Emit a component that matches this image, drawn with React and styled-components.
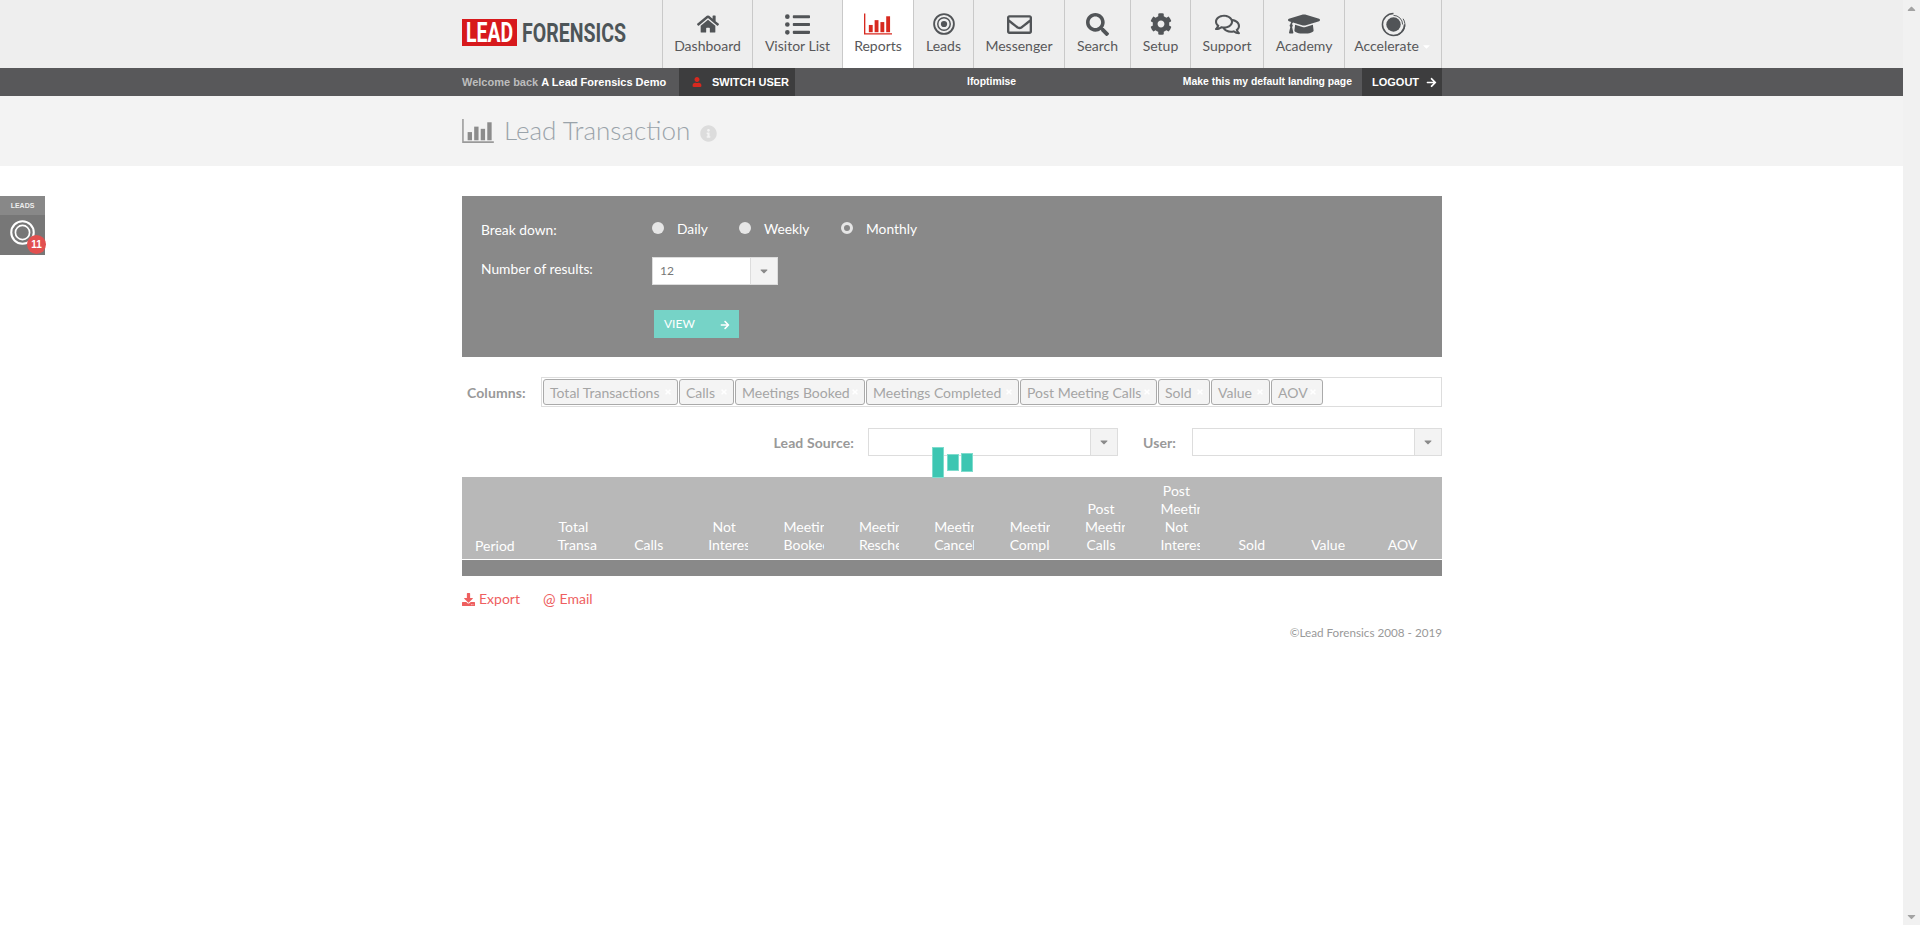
import React from 'react';
import styled, { createGlobalStyle } from 'styled-components';
import { FaHome, FaListUl, FaRegEnvelope, FaSearch, FaCog, FaRegComments, FaGraduationCap, FaUser, FaArrowRight, FaDownload, FaInfoCircle, FaCaretDown, FaCaretUp, FaTimes } from 'react-icons/fa';

const GlobalStyle = createGlobalStyle`
    html, body {
        margin: 0;
        padding: 0;
        background: #fff;
        font-family: Lato, "Open Sans", sans-serif;
    }
`;

const Page = styled.div`
    display: flex;
    min-height: 925px;
`;

const Content = styled.div`
    flex: 1;
    min-width: 0;
    position: relative;
`;

const ScrollTrack = styled.div`
    width: 17px;
    flex: none;
    background: #f1f1f1;
    color: #a3a3a3;
    display: flex;
    flex-direction: column;
    justify-content: space-between;
    align-items: center;
    height: 925px;
    font-size: 13px;
    svg { display: block; margin: 2px 0; }
`;

const Wrap = styled.div`
    width: 980px;
    margin-left: 462px;
`;

const Header = styled.header`
    height: 68px;
    background: #eeeeee;
`;

const HeaderInner = styled(Wrap)`
    display: flex;
    height: 68px;
    justify-content: space-between;
`;

const LogoBox = styled.div`
    padding-top: 19px;
`;

const Nav = styled.nav`
    display: flex;
    border-right: 1px solid #c9c9c9;
`;

const NavItem = styled.a`
    width: ${p => p.$w}px;
    box-sizing: border-box;
    border-left: 1px solid #c9c9c9;
    background: ${p => p.$active ? '#fff' : 'transparent'};
    display: flex;
    flex-direction: column;
    align-items: center;
    color: #58585a;
    font-size: 14px;
    line-height: 18px;
    white-space: nowrap;
`;

const NavIcon = styled.div`
    height: 37px;
    box-sizing: border-box;
    padding-top: 11px;
    display: flex;
    align-items: center;
    justify-content: center;
    color: #515457;
`;

const NavLabel = styled.span`
    display: flex;
    align-items: center;
`;

const NavCaret = styled(FaCaretDown)`
    color: #fff;
    font-size: 11px;
    margin-left: 2px;
`;

const InfoBar = styled.div`
    height: 28px;
    background: #58585a;
    font-family: "Liberation Sans", Arial, sans-serif;
    font-size: 11px;
    font-weight: 700;
    color: #fff;
`;

const InfoInner = styled(Wrap)`
    display: flex;
    align-items: stretch;
    height: 28px;
    line-height: 28px;
    white-space: nowrap;
`;

const Welcome = styled.span`
    width: 217px;
    color: #bdbdbd;
    b { color: #fff; }
`;

const DarkBlock = styled.a`
    display: flex;
    align-items: center;
    background: #3d3d3e;
    box-sizing: border-box;
    width: ${p => p.$w}px;
    padding-left: ${p => p.$pad}px;
    gap: ${p => p.$gap}px;
    svg { flex: none; }
`;

const Domain = styled.span`
    margin-left: 172px;
    font-size: 10.4px;
`;

const DefaultLink = styled.a`
    margin-left: auto;
    margin-right: 10px;
    font-size: 10.4px;
`;

const TitleBand = styled.div`
    height: 70px;
    background: #f3f3f3;
`;

const TitleInner = styled(Wrap)`
    display: flex;
    align-items: center;
    height: 70px;
`;

const Title = styled.h1`
    margin: 0 0 0 10px;
    font-size: 26px;
    font-weight: 300;
    color: #9aa3aa;
    line-height: 30px;
    padding-bottom: 3px;
`;

const InfoIcon = styled(FaInfoCircle)`
    color: #dcdcdc;
    font-size: 17px;
    margin-left: 10px;
    margin-top: 5px;
`;

const SideTab = styled.div`
    position: absolute;
    left: 0;
    top: 196px;
    width: 45px;
    height: 59px;
    background: #777;
`;

const SideTabHead = styled.div`
    height: 19px;
    line-height: 19px;
    background: #888;
    color: #eee;
    font-family: "Liberation Sans", Arial, sans-serif;
    font-size: 7px;
    font-weight: 700;
    text-align: center;
`;

const SideIcon = styled.div`
    padding: 5px 0 0 10px;
`;

const SideBadge = styled.span`
    position: absolute;
    left: 27px;
    top: 39px;
    width: 19px;
    height: 19px;
    border-radius: 50%;
    background: #e2504f;
    color: #fff;
    font-family: "Liberation Sans", Arial, sans-serif;
    font-size: 10px;
    font-weight: 700;
    line-height: 19px;
    text-align: center;
`;

const Main = styled(Wrap)`
    position: relative;
    padding-top: 30px;
`;

const FilterPanel = styled.section`
    background: #898989;
    padding: 22px 0 20px 19px;
    height: 161px;
    box-sizing: border-box;
    color: #fff;
    font-size: 13.8px;
`;

const FilterRow = styled.div`
    display: grid;
    grid-template-columns: 171px 1fr;
    align-items: start;
    margin-bottom: ${p => p.$mb}px;
`;

const FilterLabel = styled.label`
    line-height: 18px;
    padding-top: 3px;
`;

const Radios = styled.div`
    display: flex;
    height: 20px;
    align-items: center;
`;

const Radio = styled.span`
    display: flex;
    align-items: center;
    width: ${p => p.$w}px;
    &::before {
        content: '';
        width: 12px;
        height: 12px;
        box-sizing: border-box;
        border-radius: 50%;
        background: ${p => p.$on ? '#888' : '#e6e6e6'};
        border: ${p => p.$on ? '3px solid #e6e6e6' : 'none'};
        margin-right: 13px;
    }
`;

const SelectBox = styled.div`
    display: flex;
    width: ${p => p.$w}px;
    height: 28px;
    box-sizing: border-box;
    border: 1px solid #dddddd;
    background: #fff;
    color: #777;
    font-size: 12px;
    line-height: 26px;
`;

const SelectValue = styled.div`
    flex: 1;
    padding-left: 7px;
`;

const SelectArrow = styled.div`
    width: 26px;
    border-left: 1px solid #dddddd;
    background: #f3f3f3;
    display: flex;
    align-items: center;
    justify-content: center;
    color: #8a8a8a;
    font-size: 12px;
`;

const ViewButton = styled.a`
    display: flex;
    align-items: center;
    justify-content: space-between;
    width: 85px;
    height: 28px;
    margin-left: 173px;
    padding: 0 9px 2px 10px;
    box-sizing: border-box;
    background: #76d3c7;
    color: #fff;
    font-size: 12px;
    svg { margin-top: 3px; }
`;

const ColumnsRow = styled.div`
    display: flex;
    align-items: center;
    margin-top: 20px;
`;

const ColumnsLabel = styled.span`
    width: 79px;
    padding-left: 5px;
    box-sizing: border-box;
    color: #999;
    font-weight: 700;
    font-size: 14px;
    letter-spacing: 0.1px;
`;

const TagBox = styled.div`
    flex: 1;
    height: 30px;
    box-sizing: border-box;
    border: 1px solid #dddddd;
    padding: 1px;
    display: flex;
    gap: 1px;
`;

const Tag = styled.span`
    display: flex;
    justify-content: space-between;
    align-items: center;
    width: ${p => p.$w}px;
    height: 26px;
    box-sizing: border-box;
    border: 1px solid #aaa;
    border-radius: 3px;
    background: #f4f4f4;
    padding: 0 5px 0 6px;
    color: #a5a5a5;
    font-size: 14px;
    white-space: nowrap;
    svg { color: #fff; font-size: 8px; flex: none; }
`;

const SelectRow = styled.div`
    display: flex;
    justify-content: flex-end;
    align-items: center;
    margin-top: 21px;
`;

const SelectLabel = styled.span`
    color: #999;
    font-weight: 700;
    font-size: 14px;
    letter-spacing: 0.1px;
    margin-right: ${p => p.$mr}px;
`;

const SelectGap = styled.div`
    width: 25px;
`;

const Loader = styled.div`
    position: absolute;
    left: 470px;
    top: 281px;
    display: flex;
    align-items: center;
    gap: 2.5px;
`;

const LoaderBar = styled.span`
    width: 12px;
    height: ${p => p.$h}px;
    box-sizing: border-box;
    background: #3cc6b2;
    border: 1px solid #7fdccd;
`;

const Table = styled.table`
    width: 980px;
    margin-top: 21px;
    table-layout: fixed;
    border-collapse: collapse;
    font-size: 14px;
    line-height: 18px;
    color: #fff;
`;

const HeadRow = styled.tr`
    background: #b8b8b8;
    border-bottom: 1px solid #fff;
`;

const Th = styled.th`
    padding: 5px 0;
    font-weight: 400;
    vertical-align: bottom;
`;

const ThClip = styled.div`
    width: 40px;
    box-sizing: border-box;
    margin-left: 20px;
    padding-right: 8px;
    overflow: hidden;
    text-align: center;
`;

const ThPeriod = styled.div`
    margin-left: 13px;
    text-align: left;
    position: relative;
    top: 1px;
`;

const EmptyRow = styled.td`
    height: 16px;
    padding: 0;
    background: #898989;
`;

const Links = styled.div`
    display: flex;
    gap: 23px;
    margin-top: 14px;
`;

const ExportLink = styled.a`
    display: flex;
    align-items: center;
    gap: 4px;
    color: #ee5f5f;
    font-size: 14px;
    line-height: 18px;
`;

const AtSign = styled.span`
    font-size: 15px;
`;

const Footer = styled.div`
    margin-top: 16px;
    text-align: right;
    color: #999;
    font-size: 11.7px;
    line-height: 16px;
`;

const LogoMark = () => (
    <svg width="165" height="27" viewBox="0 0 165 27">
        <rect width="55" height="27" fill="#d7191c" />
        <text x="4" y="23" fontFamily="Roboto, sans-serif" fontWeight="700" fontSize="28" fill="#fff" textLength="47" lengthAdjust="spacingAndGlyphs">LEAD</text>
        <text x="60" y="22.7" fontFamily="Roboto, sans-serif" fontWeight="700" fontSize="25" fill="#4d5558" textLength="104" lengthAdjust="spacingAndGlyphs">FORENSICS</text>
    </svg>
);

const BarsIcon = ({ color, axis, w = 28, h = 22 }) => (
    <svg width={w} height={h} viewBox="0 0 29 22">
        <path d="M0.7 0v21.2H29" fill="none" stroke={axis} strokeWidth="1.4" />
        <rect x="5" y="12" width="4" height="7.5" fill={color} />
        <rect x="11" y="7" width="4" height="12.5" fill={color} />
        <rect x="17" y="9" width="4" height="10.5" fill={color} />
        <rect x="23" y="3" width="4" height="16.5" fill={color} />
    </svg>
);

const TargetIcon = ({ color = '#515457', size = 22, hollow }) => (
    <svg width={size} height={size} viewBox="0 0 24 24" fill="none" stroke={color}>
        <circle cx="12" cy="12" r="10.8" strokeWidth="2" />
        <circle cx="12" cy="12" r="6.8" strokeWidth="1.6" />
        {!hollow && <circle cx="12" cy="12" r="3.4" fill={color} stroke="none" />}
    </svg>
);

const AccelerateIcon = () => (
    <svg width="25" height="25" viewBox="0 0 26 26" fill="none">
        <circle cx="13" cy="13" r="7.5" fill="#515457" />
        <path d="M13 1.5a11.5 11.5 0 1 0 11.5 11.5" stroke="#515457" strokeWidth="1.6" />
        <path d="M23 7a11.5 11.5 0 0 1-7 17.5" stroke="#515457" strokeWidth="1" />
        <path d="M13 3.5a9.5 9.5 0 0 1 9.5 9.5" stroke="#515457" strokeWidth="1" />
    </svg>
);

const navItems = [
    { label: 'Dashboard', w: 90, icon: <FaHome size={22} /> },
    { label: 'Visitor List', w: 90, icon: <FaListUl size={25} /> },
    { label: 'Reports', w: 71, active: true, icon: <BarsIcon color="#d7291f" axis="#d7291f" /> },
    { label: 'Leads', w: 60, icon: <TargetIcon /> },
    { label: 'Messenger', w: 91, icon: <FaRegEnvelope size={25} /> },
    { label: 'Search', w: 66, icon: <FaSearch size={23} /> },
    { label: 'Setup', w: 60, icon: <FaCog size={22} /> },
    { label: 'Support', w: 73, icon: <FaRegComments size={25} /> },
    { label: 'Academy', w: 81, icon: <FaGraduationCap size={32} /> },
    { label: 'Accelerate', w: 97, icon: <AccelerateIcon />, caret: true },
];

const tags = [
    ['Total Transactions', 135],
    ['Calls', 55],
    ['Meetings Booked', 130],
    ['Meetings Completed', 153],
    ['Post Meeting Calls', 137],
    ['Sold', 52],
    ['Value', 59],
    ['AOV', 52],
];

const headings = [
    ['Total', 'Transactions'],
    ['Calls'],
    ['Not', 'Interested'],
    ['Meetings', 'Booked'],
    ['Meetings', 'Rescheduled'],
    ['Meetings', 'Cancelled'],
    ['Meetings', 'Completed'],
    ['Post', 'Meeting', 'Calls'],
    ['Post', 'Meeting', 'Not', 'Interested'],
    ['Sold'],
    ['Value'],
    ['AOV'],
];

const App = () => {
    return (
        <Page>
            <GlobalStyle />
            <Content>
                <Header>
                    <HeaderInner>
                        <LogoBox><LogoMark /></LogoBox>
                        <Nav>
                            {navItems.map(item => (
                                <NavItem key={item.label} $w={item.w} $active={item.active}>
                                    <NavIcon>{item.icon}</NavIcon>
                                    <NavLabel>{item.label}{item.caret && <NavCaret />}</NavLabel>
                                </NavItem>
                            ))}
                        </Nav>
                    </HeaderInner>
                </Header>
                <InfoBar>
                    <InfoInner>
                        <Welcome>Welcome back <b>A Lead Forensics Demo</b></Welcome>
                        <DarkBlock $w={116} $pad={13} $gap={10}><FaUser color="#d7291f" size={10} />SWITCH USER</DarkBlock>
                        <Domain>lfoptimise</Domain>
                        <DefaultLink>Make this my default landing page</DefaultLink>
                        <DarkBlock $w={80} $pad={10} $gap={7}>LOGOUT<FaArrowRight size={11} /></DarkBlock>
                    </InfoInner>
                </InfoBar>
                <TitleBand>
                    <TitleInner>
                        <BarsIcon color="#8c8c8c" axis="#9a9a9a" w={32} h={24} />
                        <Title>Lead Transaction</Title>
                        <InfoIcon />
                    </TitleInner>
                </TitleBand>
                <SideTab>
                    <SideTabHead>LEADS</SideTabHead>
                    <SideIcon><TargetIcon color="#fff" size={25} hollow /></SideIcon>
                    <SideBadge>11</SideBadge>
                </SideTab>
                <Main>
                    <FilterPanel>
                        <FilterRow $mb={18}>
                            <FilterLabel>Break down:</FilterLabel>
                            <Radios>
                                <Radio $w={87}>Daily</Radio>
                                <Radio $w={102}>Weekly</Radio>
                                <Radio $on>Monthly</Radio>
                            </Radios>
                        </FilterRow>
                        <FilterRow $mb={25}>
                            <FilterLabel>Number of results:</FilterLabel>
                            <SelectBox $w={126}>
                                <SelectValue>12</SelectValue>
                                <SelectArrow><FaCaretDown /></SelectArrow>
                            </SelectBox>
                        </FilterRow>
                        <ViewButton>VIEW<FaArrowRight size={10} /></ViewButton>
                    </FilterPanel>
                    <ColumnsRow>
                        <ColumnsLabel>Columns:</ColumnsLabel>
                        <TagBox>
                            {tags.map(([name, w]) => (
                                <Tag key={name} $w={w}>{name}<FaTimes /></Tag>
                            ))}
                        </TagBox>
                    </ColumnsRow>
                    <SelectRow>
                        <SelectLabel $mr={14}>Lead Source:</SelectLabel>
                        <SelectBox $w={250}>
                            <SelectValue />
                            <SelectArrow><FaCaretDown /></SelectArrow>
                        </SelectBox>
                        <SelectGap />
                        <SelectLabel $mr={16}>User:</SelectLabel>
                        <SelectBox $w={250}>
                            <SelectValue />
                            <SelectArrow><FaCaretDown /></SelectArrow>
                        </SelectBox>
                    </SelectRow>
                    <Loader>
                        <LoaderBar $h={31} />
                        <LoaderBar $h={17} />
                        <LoaderBar $h={19} />
                    </Loader>
                    <Table>
                        <thead>
                            <HeadRow>
                                <Th><ThPeriod>Period</ThPeriod></Th>
                                {headings.map(lines => (
                                    <Th key={lines.join(' ')}>
                                        <ThClip>
                                            {lines.map(line => <div key={line}>{line}</div>)}
                                        </ThClip>
                                    </Th>
                                ))}
                            </HeadRow>
                        </thead>
                        <tbody>
                            <tr><EmptyRow colSpan={13} /></tr>
                        </tbody>
                    </Table>
                    <Links>
                        <ExportLink><FaDownload size={13} />Export</ExportLink>
                        <ExportLink><AtSign>@</AtSign>Email</ExportLink>
                    </Links>
                    <Footer>©Lead Forensics 2008 - 2019</Footer>
                </Main>
            </Content>
            <ScrollTrack>
                <FaCaretUp />
                <FaCaretDown />
            </ScrollTrack>
        </Page>
    );
}

export default App;
